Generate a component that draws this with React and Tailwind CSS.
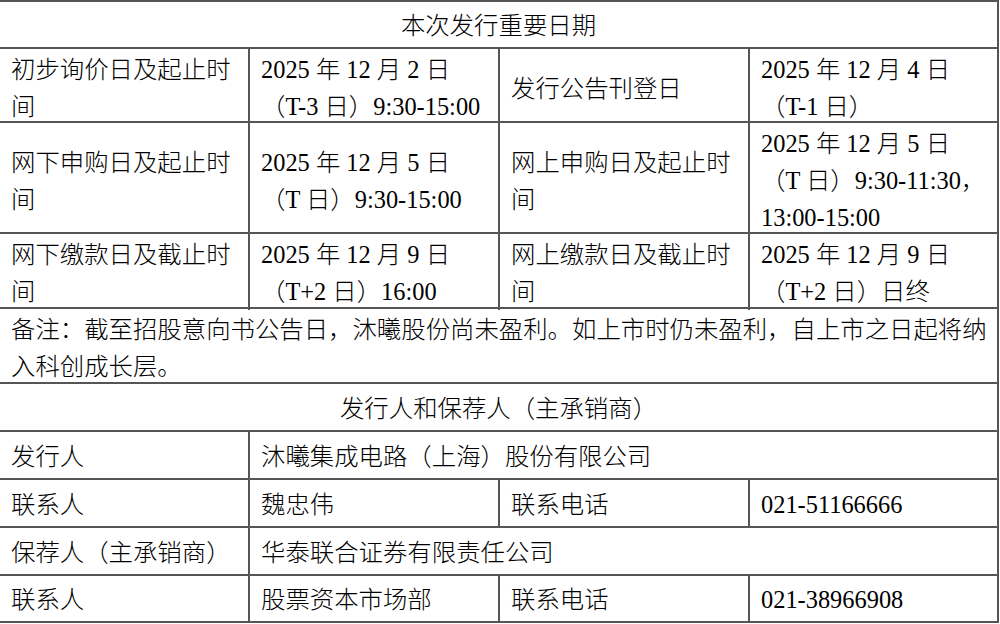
import React from "react";

const line = "border-[#555]";

function Cell({ children, span = "", center = false }) {
  return (
    <div
      className={`flex items-center ${span} ${center ? "justify-center" : "pl-[11px]"} border-r-2 ${line} whitespace-nowrap leading-[37px]`}
    >
      <div className="pt-[2px]">{children}</div>
    </div>
  );
}

function Row({ h, children }) {
  return (
    <div className={`grid grid-cols-[250px_250px_250px_249px] border-b-2 ${line} ${h}`}>
      {children}
    </div>
  );
}

export default function App() {
  return (
    <div className="w-[1000px] h-[624px] bg-white overflow-hidden">
      <div
        className={`w-[999px] border-t-2 ${line} text-[24.4px] font-light text-black font-[family-name:'Liberation_Serif','Noto_Sans_CJK_SC',serif]`}
      >
        <Row h="h-[47px]">
          <Cell span="col-span-4" center>
            本次发行重要日期
          </Cell>
        </Row>

        <Row h="h-[74px]">
          <Cell>
            初步询价日及起止时
            <br />间
          </Cell>
          <Cell>
            2025 年 12 月 2 日
            <br />（T-3 日）9:30-15:00
          </Cell>
          <Cell>发行公告刊登日</Cell>
          <Cell>
            2025 年 12 月 4 日
            <br />（T-1 日）
          </Cell>
        </Row>

        <Row h="h-[111px]">
          <Cell>
            网下申购日及起止时
            <br />间
          </Cell>
          <Cell>
            2025 年 12 月 5 日
            <br />（T 日）9:30-15:00
          </Cell>
          <Cell>
            网上申购日及起止时
            <br />间
          </Cell>
          <Cell>
            2025 年 12 月 5 日
            <br />（T 日）9:30-11:30，
            <br />
            13:00-15:00
          </Cell>
        </Row>

        <Row h="h-[75px]">
          <Cell>
            网下缴款日及截止时
            <br />间
          </Cell>
          <Cell>
            2025 年 12 月 9 日
            <br />（T+2 日）16:00
          </Cell>
          <Cell>
            网上缴款日及截止时
            <br />间
          </Cell>
          <Cell>
            2025 年 12 月 9 日
            <br />（T+2 日）日终
          </Cell>
        </Row>

        <Row h="h-[75px]">
          <Cell span="col-span-4">
            备注：截至招股意向书公告日，沐曦股份尚未盈利。如上市时仍未盈利，自上市之日起将纳
            <br />
            入科创成长层。
          </Cell>
        </Row>

        <Row h="h-[48px]">
          <Cell span="col-span-4" center>
            发行人和保荐人（主承销商）
          </Cell>
        </Row>

        <Row h="h-[48px]">
          <Cell>发行人</Cell>
          <Cell span="col-span-3">沐曦集成电路（上海）股份有限公司</Cell>
        </Row>

        <Row h="h-[48px]">
          <Cell>联系人</Cell>
          <Cell>魏忠伟</Cell>
          <Cell>联系电话</Cell>
          <Cell>021-51166666</Cell>
        </Row>

        <Row h="h-[48px]">
          <Cell>保荐人（主承销商）</Cell>
          <Cell span="col-span-3">华泰联合证券有限责任公司</Cell>
        </Row>

        <Row h="h-[47px]">
          <Cell>联系人</Cell>
          <Cell>股票资本市场部</Cell>
          <Cell>联系电话</Cell>
          <Cell>021-38966908</Cell>
        </Row>
      </div>
    </div>
  );
}
